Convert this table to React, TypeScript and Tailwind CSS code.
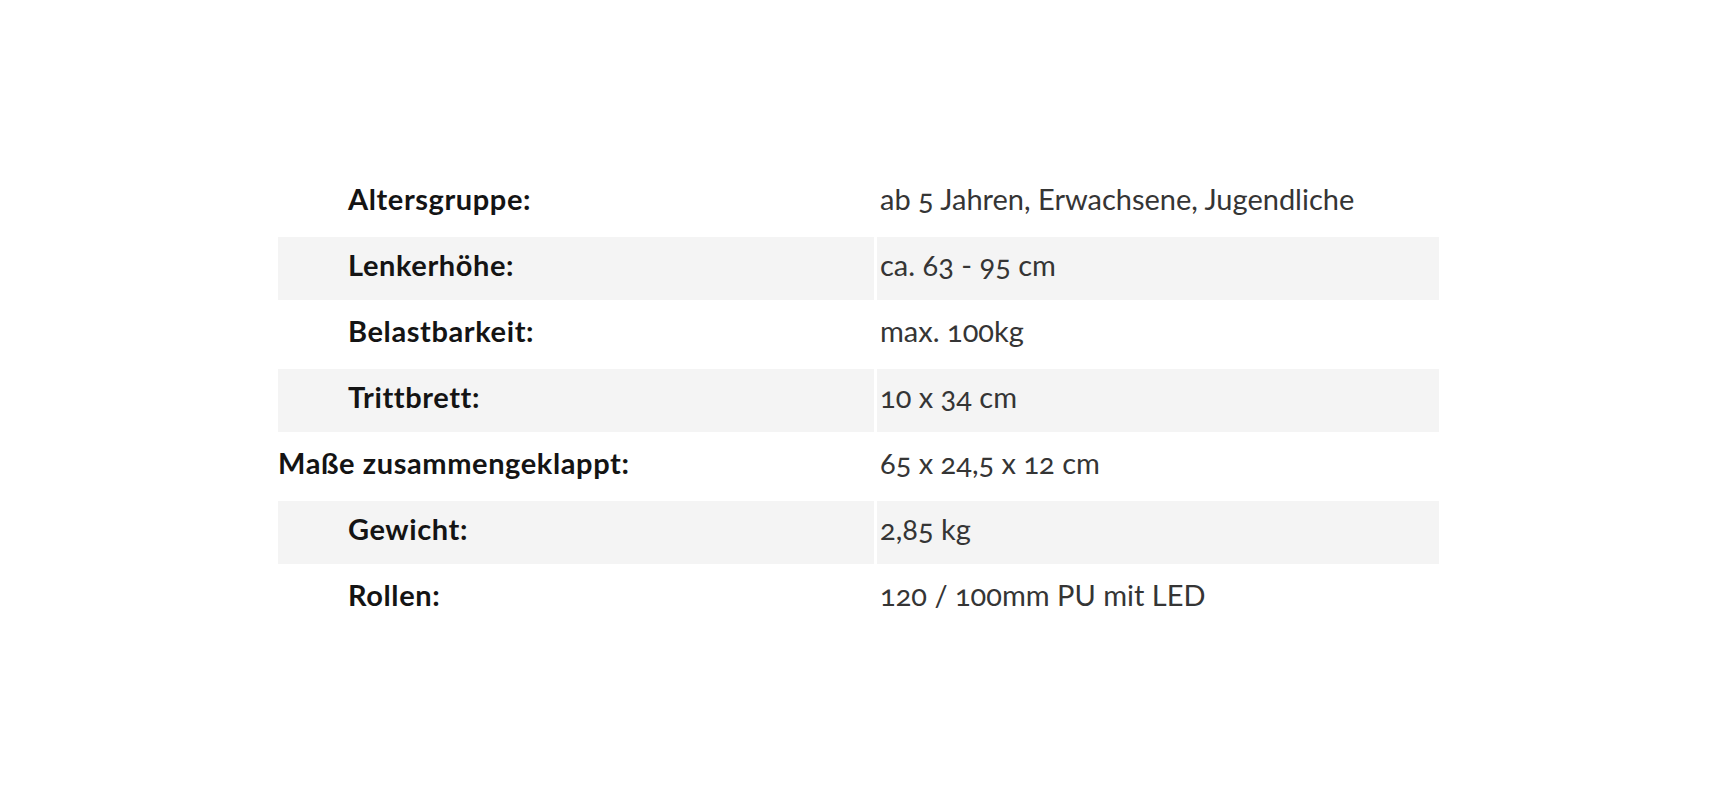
const rows: { label: string; value: string; flush?: boolean }[] = [
  { label: "Altersgruppe:", value: "ab 5 Jahren, Erwachsene, Jugendliche" },
  { label: "Lenkerhöhe:", value: "ca. 63 - 95 cm" },
  { label: "Belastbarkeit:", value: "max. 100kg" },
  { label: "Trittbrett:", value: "10 x 34 cm" },
  { label: "Maße zusammengeklappt:", value: "65 x 24,5 x 12 cm", flush: true },
  { label: "Gewicht:", value: "2,85 kg" },
  { label: "Rollen:", value: "120 / 100mm PU mit LED" },
];

export default function App() {
  return (
    <div className="min-h-[804px] w-full bg-white pt-[168px] pl-[275px] font-['Lato',sans-serif]">
      <table className="w-[1167px] border-separate border-spacing-[3px] oldstyle-nums">
        <tbody>
          {rows.map((r, i) => (
            <tr key={r.label} className={i % 2 === 1 ? "bg-[#f4f4f4]" : ""}>
              <td
                className={`h-[63px] w-[596px] p-0 pb-[8px] align-middle text-[29px] leading-none font-bold tracking-[0.6px] text-[#141414] ${
                  r.flush ? "pl-0" : "pl-[70px]"
                }`}
              >
                {r.label}
              </td>
              <td className="h-[63px] p-0 pb-[8px] pl-[3px] align-middle text-[29px] leading-none text-[#353535]">
                {r.value}
              </td>
            </tr>
          ))}
        </tbody>
      </table>
    </div>
  );
}
